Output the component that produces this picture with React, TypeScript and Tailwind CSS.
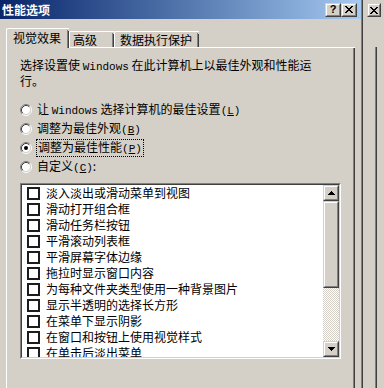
import React from 'react';

const Raised = ({ className = '', children }: { className?: string; children?: React.ReactNode }) => (
  <div className={`border border-t-[#d4d0c8] border-l-[#d4d0c8] border-r-[#404040] border-b-[#404040] ${className}`}>
    <div className="w-full h-full border border-t-white border-l-white border-r-[#808080] border-b-[#808080] bg-[#d4d0c8] flex items-center justify-center">
      {children}
    </div>
  </div>
);

const CloseGlyph = () => (
  <svg width="8" height="7" viewBox="0 0 8 7" shapeRendering="crispEdges">
    <path
      fill="#000"
      d="M0 0h2v1H0z M6 0h2v1H6z M1 1h2v1H1z M5 1h2v1H5z M2 2h4v1H2z M3 3h2v1H3z M2 4h4v1H2z M1 5h2v1H1z M5 5h2v1H5z M0 6h2v1H0z M6 6h2v1H6z"
    />
  </svg>
);

const Arrow = ({ down = false }: { down?: boolean }) => (
  <svg width="7" height="4" viewBox="0 0 7 4" shapeRendering="crispEdges" className={down ? 'rotate-180' : ''}>
    <path fill="#000" d="M3 0h1v1H3z M2 1h3v1H2z M1 2h5v1H1z M0 3h7v1H0z" />
  </svg>
);

const Radio = ({ checked = false }: { checked?: boolean }) => (
  <svg width="12" height="12" viewBox="0 0 12 12" className="shrink-0">
    <circle cx="6" cy="6" r="4.5" fill="#fff" />
    <path d="M2.11 9.89 A5.5 5.5 0 0 1 9.89 2.11" stroke="#808080" fill="none" />
    <path d="M9.89 2.11 A5.5 5.5 0 0 1 2.11 9.89" stroke="#fff" fill="none" />
    <path d="M2.82 9.18 A4.5 4.5 0 0 1 9.18 2.82" stroke="#404040" fill="none" />
    <path d="M9.18 2.82 A4.5 4.5 0 0 1 2.82 9.18" stroke="#d4d0c8" fill="none" />
    {checked && <circle cx="6" cy="6" r="2" fill="#000" />}
  </svg>
);

const Latin = ({ children }: { children: React.ReactNode }) => (
  <span className="font-['Liberation_Mono',monospace] text-[11px]">{children}</span>
);

const Acc = ({ k }: { k: string }) => (
  <Latin>
    (<span className="underline">{k}</span>)
  </Latin>
);

const effects = [
  '淡入淡出或滑动菜单到视图',
  '滑动打开组合框',
  '滑动任务栏按钮',
  '平滑滚动列表框',
  '平滑屏幕字体边缘',
  '拖拉时显示窗口内容',
  '为每种文件夹类型使用一种背景图片',
  '显示半透明的选择长方形',
  '在菜单下显示阴影',
  '在窗口和按钮上使用视觉样式',
  '在单击后淡出菜单',
];

export default function App() {
  return (
    <div className="w-[384px] h-[388px] overflow-hidden bg-[#d4d0c8] flex text-black text-[12px] leading-[14px] font-['Noto_Sans_CJK_SC','Liberation_Sans',sans-serif]">
      {/* dialog */}
      <div className="w-[363px] h-full border-r border-[#404040] shrink-0">
        <div className="h-full border-r border-[#808080] flex flex-col">
          {/* title bar */}
          <div className="h-[19px] shrink-0 flex items-center bg-linear-to-r from-[#0a246a] to-[#a6caf0] pl-[2px] pr-[4px]">
            <span className="text-white font-bold text-[12px] leading-none">性能选项</span>
            <div className="ml-auto flex">
              <Raised className="w-[16px] h-[14px]">
                <span className="font-['Liberation_Sans',sans-serif] font-bold text-[11px] leading-none">?</span>
              </Raised>
              <Raised className="w-[16px] h-[14px]">
                <CloseGlyph />
              </Raised>
            </div>
          </div>

          {/* tabs */}
          <div className="relative z-10 mt-[9px] -mb-px h-[20px] flex items-end pl-[6px]">
            <div className="h-[20px] w-[63px] bg-[#d4d0c8] border-l border-t border-white rounded-tl-[2px] flex">
              <div className="flex-1 flex items-center justify-center pb-px">视觉效果</div>
              <div className="w-px bg-[#808080] mt-px" />
              <div className="w-px bg-[#404040] mt-[2px]" />
            </div>
            <div className="h-[16px] w-[45px] mb-px border-l border-t border-white rounded-tl-[2px] flex">
              <div className="flex-1 pl-[3px] flex items-center">高级</div>
              <div className="w-px bg-[#808080] mt-px" />
              <div className="w-px bg-[#404040] mt-[2px]" />
            </div>
            <div className="h-[16px] w-[85px] mb-px border-l border-t border-white rounded-tl-[2px] flex">
              <div className="flex-1 pl-[5px] flex items-center">数据执行保护</div>
              <div className="w-px bg-[#808080] mt-px" />
              <div className="w-px bg-[#404040] mt-[2px]" />
            </div>
          </div>

          {/* panel */}
          <div className="flex-1 ml-[6px] mr-[6px] border-l border-t border-white flex">
            <div className="flex-1 pl-[13px] pt-[10px] flex flex-col">
              <p className="whitespace-nowrap">
                选择设置使 <Latin>Windows</Latin> 在此计算机上以最佳外观和性能运
                <br />
                行。
              </p>

              <div className="mt-[12px] flex flex-col">
                <div className="h-[19px] flex items-center">
                  <Radio />
                  <span className="ml-[5px] whitespace-nowrap">
                    让 <Latin>Windows</Latin> 选择计算机的最佳设置<Acc k="L" />
                  </span>
                </div>
                <div className="h-[19px] flex items-center">
                  <Radio />
                  <span className="ml-[5px] whitespace-nowrap">
                    调整为最佳外观<Acc k="B" />
                  </span>
                </div>
                <div className="h-[19px] flex items-center">
                  <Radio checked />
                  <span className="ml-[4px] pl-px pr-px border border-dotted border-black whitespace-nowrap">
                    调整为最佳性能<Acc k="P" />
                  </span>
                </div>
                <div className="h-[19px] flex items-center">
                  <Radio />
                  <span className="ml-[5px] whitespace-nowrap">
                    自定义<Acc k="C" />:
                  </span>
                </div>
              </div>

              {/* list box */}
              <div className="mt-[7px] w-[321px] h-[176px] border border-t-[#808080] border-l-[#808080] border-r-white border-b-white">
                <div className="h-full border border-t-[#404040] border-l-[#404040] border-r-[#d4d0c8] border-b-[#d4d0c8] bg-white flex">
                  <div className="flex-1 overflow-hidden">
                    {effects.map((e) => (
                      <div key={e} className="h-[16px] flex items-center pl-[5px] whitespace-nowrap">
                        <span className="w-[13px] h-[13px] shrink-0 border-2 border-[#1c1c1c] bg-white" />
                        <span className="ml-[6px]">{e}</span>
                      </div>
                    ))}
                  </div>
                  <div className="w-[16px] flex flex-col shrink-0">
                    <Raised className="h-[16px] shrink-0">
                      <Arrow />
                    </Raised>
                    <Raised className="h-[87px] shrink-0" />
                    <div className="flex-1 bg-[image:repeating-conic-gradient(#d4d0c8_0_25%,#ffffff_0_50%)] bg-[length:2px_2px]" />
                    <Raised className="h-[16px] shrink-0">
                      <Arrow down />
                    </Raised>
                  </div>
                </div>
              </div>
            </div>
            <div className="w-px bg-[#808080]" />
            <div className="w-px bg-[#404040]" />
          </div>
        </div>
      </div>

      {/* window behind */}
      <div className="flex-1 flex flex-col">
        <div className="h-[47px] shrink-0 pl-[4px] pt-[3px]">
          <Raised className="w-[14px] h-[14px]">
            <CloseGlyph />
          </Raised>
        </div>
        <div className="flex-1 w-[14px] flex justify-end">
          <div className="w-px bg-[#808080]" />
          <div className="w-px bg-[#404040]" />
        </div>
      </div>
    </div>
  );
}
